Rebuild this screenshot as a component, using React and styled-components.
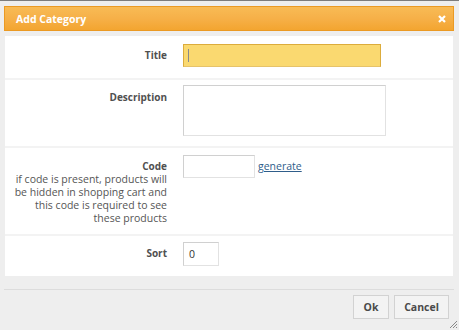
import React from 'react';
import styled, { createGlobalStyle } from 'styled-components';

const GlobalStyle = createGlobalStyle`
  html, body {
    margin: 0;
    padding: 0;
    background: #eeeeee;
    font-family: "Open Sans", "Noto Sans", sans-serif;
  }
`;

const Page = styled.div`
  width: 459px;
  height: 330px;
  box-sizing: border-box;
  border-top: 1px solid #7d7d7d;
  background: #eeeeee;
  position: relative;
  overflow: hidden;
`;

const Header = styled.div`
  margin: 5px 5px 0 4px;
  height: 25px;
  box-sizing: border-box;
  border: 1px solid #eb9a23;
  background: linear-gradient(to bottom, #f8bb55 0%, #f6b048 50%, #f3a530 100%);
  display: flex;
  align-items: center;
  justify-content: space-between;
  padding: 0 7px 0 11px;
`;

const HeaderTitle = styled.span`
  color: #ffffff;
  font-size: 10.5px;
  font-weight: 700;
`;

const CloseIcon = styled.svg`
  width: 8px;
  height: 8px;
  display: block;
`;

const Panel = styled.div`
  margin: 5px 6px 0 5px;
  background: #ffffff;
`;

const Row = styled.div`
  display: grid;
  grid-template-columns: 162px 1fr;
  column-gap: 16px;
  padding: ${({ $top }) => $top}px 0 ${({ $bottom }) => $bottom}px;
  border-bottom: ${({ $last }) => ($last ? 'none' : '2px solid #f3f3f3')};
`;

const LabelCell = styled.div`
  text-align: right;
  color: #555555;
  font-size: 10.5px;
  line-height: 13px;
  padding-top: ${({ $offset }) => $offset || 0}px;
`;

const LabelText = styled.div`
  font-weight: 700;
  font-size: 10px;
  color: #505050;
`;

const FieldCell = styled.div`
  display: flex;
  align-items: flex-start;
  gap: 3px;
`;

const Input = styled.div`
  box-sizing: border-box;
  width: ${({ $w }) => $w}px;
  height: ${({ $h }) => $h}px;
  border: 1px solid ${({ $active }) => ($active ? '#dcac3c' : '#d0d0d0')};
  border-right-color: ${({ $active }) => ($active ? '#dcac3c' : '#e2e2e2')};
  border-bottom-color: ${({ $active }) => ($active ? '#e6c36a' : '#e2e2e2')};
  background: ${({ $active }) => ($active ? '#fad970' : '#ffffff')};
  font-size: 10.5px;
  color: #333333;
  display: flex;
  align-items: center;
  padding-left: 5px;
`;

const Caret = styled.span`
  width: 1px;
  height: 13px;
  background: #8a8a8a;
  margin-left: -1px;
`;

const Link = styled.a`
  color: #2f5d8a;
  font-size: 10.5px;
  text-decoration: underline;
  margin-top: 4px;
  cursor: pointer;
`;

const Footer = styled.div`
  margin: 13px 5px 0 4px;
  border-top: 1px solid #dcdcdc;
  display: flex;
  justify-content: flex-end;
  gap: 5px;
  padding: 5px 5px 0 0;
`;

const Button = styled.button`
  box-sizing: border-box;
  width: ${({ $w }) => $w}px;
  height: 24px;
  padding: 0;
  border: 1px solid #d2d2d2;
  background: #f3f3f3;
  color: #4a4a4a;
  font-family: "Open Sans", "Noto Sans", sans-serif;
  font-size: 10.5px;
  font-weight: 700;
  cursor: pointer;
`;

const Grip = styled.svg`
  position: absolute;
  right: 1px;
  bottom: 1px;
  width: 9px;
  height: 9px;
`;

export default function App() {
  return (
    <Page>
      <GlobalStyle />
      <Header>
        <HeaderTitle>Add Category</HeaderTitle>
        <CloseIcon viewBox="0 0 8 8">
          <path d="M1 1 L7 7 M7 1 L1 7" stroke="#ffffff" strokeWidth="2.2" />
        </CloseIcon>
      </Header>
      <Panel>
        <Row $top={8} $bottom={11}>
          <LabelCell $offset={5}>
            <LabelText>Title</LabelText>
          </LabelCell>
          <FieldCell>
            <Input $w={198} $h={23} $active>
              <Caret />
            </Input>
          </FieldCell>
        </Row>
        <Row $top={5} $bottom={10}>
          <LabelCell $offset={6}>
            <LabelText>Description</LabelText>
          </LabelCell>
          <FieldCell>
            <Input $w={203} $h={51} />
          </FieldCell>
        </Row>
        <Row $top={7} $bottom={9}>
          <LabelCell $offset={5}>
            <LabelText>Code</LabelText>
            <div>
              if code is present, products will
              <br />
              be hidden in shopping cart and
              <br />
              this code is required to see
              <br />
              these products
            </div>
          </LabelCell>
          <FieldCell>
            <Input $w={72} $h={23} />
            <Link>generate</Link>
          </FieldCell>
        </Row>
        <Row $top={6} $bottom={10} $last>
          <LabelCell $offset={5}>
            <LabelText>Sort</LabelText>
          </LabelCell>
          <FieldCell>
            <Input $w={36} $h={24}>0</Input>
          </FieldCell>
        </Row>
      </Panel>
      <Footer>
        <Button $w={36}>Ok</Button>
        <Button $w={55}>Cancel</Button>
      </Footer>
      <Grip viewBox="0 0 9 9">
        <path d="M8 1 L1 8 M8 4 L4 8 M8 7 L7 8" stroke="#8a8a8a" strokeWidth="1" />
      </Grip>
    </Page>
  );
}
